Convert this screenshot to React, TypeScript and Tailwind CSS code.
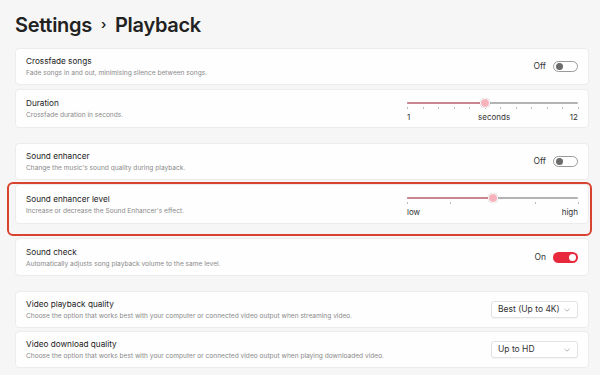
import React from "react";

const font = { fontFamily: "Inter, 'Noto Sans', sans-serif" };

function Card({ title, desc, right, className = "" }: { title: string; desc: string; right?: React.ReactNode; className?: string }) {
  return (
    <div className={`flex items-center justify-between rounded-[4px] border border-[#ececec] bg-[#fefefe] pl-[10px] pr-[10px] ${className}`}>
      <div className="flex flex-col">
        <div className="text-[8.2px] leading-[13px] text-[#222]">{title}</div>
        <div className="text-[6.6px] leading-[10px] text-[#8a8a8a]">{desc}</div>
      </div>
      {right}
    </div>
  );
}

function Toggle({ on }: { on: boolean }) {
  return (
    <div className="flex items-center gap-[7px]">
      <span className="text-[8.5px] text-[#333]">{on ? "On" : "Off"}</span>
      {on ? (
        <div className="flex h-[11px] w-[25px] items-center justify-end rounded-full bg-[#e8283c] pr-[2px]">
          <div className="h-[7px] w-[7px] rounded-full bg-white" />
        </div>
      ) : (
        <div className="flex h-[11px] w-[25px] items-center rounded-full border border-[#9a9a9a] bg-white pl-[2px]">
          <div className="h-[7px] w-[7px] rounded-full bg-[#6b6b6b]" />
        </div>
      )}
    </div>
  );
}

function Slider({ frac, ticks, labels }: { frac: number; ticks: number[]; labels: React.ReactNode }) {
  return (
    <div className="flex w-[171px] flex-col">
      <div className="relative h-[14px] w-full">
        <div className="absolute left-0 right-0 top-[6px] h-[2px] rounded-full bg-[#b3b3b3]" />
        <div className="absolute left-0 top-[6px] h-[2px] rounded-full bg-[#c98690]" style={{ width: `${frac * 100}%` }} />
        {ticks.map((t, i) => (
          <div key={i} className="absolute top-[11px] h-[2px] w-[1px] bg-[#bdbdbd]" style={{ left: `${t * 100}%` }} />
        ))}
        <div
          className="absolute top-[2px] h-[10px] w-[10px] -translate-x-1/2 rounded-full border-[1.5px] border-white bg-[#f7b3bc] shadow-[0_0_1px_rgba(0,0,0,0.3)]"
          style={{ left: `${frac * 100}%` }}
        />
      </div>
      <div className="mt-[2px] flex justify-between text-[8px] leading-[10px] text-[#333]">{labels}</div>
    </div>
  );
}

function Select({ value }: { value: string }) {
  return (
    <div className="flex h-[17px] w-[87px] items-center justify-between rounded-[3px] border border-[#e3e3e3] bg-white pl-[6px] pr-[7px] shadow-[0_1px_1px_rgba(0,0,0,0.04)]">
      <span className="text-[8.5px] text-[#333]">{value}</span>
      <svg width="6" height="4" viewBox="0 0 6 4">
        <path d="M0.5 0.8 L3 3.2 L5.5 0.8" stroke="#a0a0a0" strokeWidth="0.8" fill="none" />
      </svg>
    </div>
  );
}

export default function App() {
  const durTicks = Array.from({ length: 12 }, (_, i) => i / 11);
  return (
    <div className="h-[375px] w-[600px] overflow-hidden bg-[#f6f6f6] pl-[15px] pr-[11px]" style={font}>
      <div className="flex h-[48px] items-center gap-[9px] pt-[2px] text-[20px] font-semibold tracking-[-0.3px] text-[#222]">
        <span>Settings</span>
        <span className="text-[13px] font-semibold">›</span>
        <span>Playback</span>
      </div>
      <div className="flex flex-col gap-[4px]">
        <Card className="h-[37px]" title="Crossfade songs" desc="Fade songs in and out, minimising silence between songs." right={<Toggle on={false} />} />
        <Card
          className="h-[39px]"
          title="Duration"
          desc="Crossfade duration in seconds."
          right={
            <Slider
              frac={5 / 11}
              ticks={durTicks}
              labels={
                <>
                  <span>1</span>
                  <span className="pl-[8px]">seconds</span>
                  <span>12</span>
                </>
              }
            />
          }
        />
      </div>
      <div className="mt-[15px] flex flex-col">
        <Card className="h-[37px]" title="Sound enhancer" desc="Change the music's sound quality during playback." right={<Toggle on={false} />} />
        <div className="relative mt-[4px]">
          <Card
            className="h-[40px]"
            title="Sound enhancer level"
            desc="Increase or decrease the Sound Enhancer's effect."
            right={
              <Slider
                frac={0.5}
                ticks={[0, 0.25, 0.75, 1]}
                labels={
                  <>
                    <span>low</span>
                    <span>high</span>
                  </>
                }
              />
            }
          />
          <div className="pointer-events-none absolute -bottom-[12px] -left-[8px] -right-[3px] -top-[2px] rounded-[6px] border-2 border-[#d8432f]" />
        </div>
        <Card className="mt-[14px] h-[38px]" title="Sound check" desc="Automatically adjusts song playback volume to the same level." right={<Toggle on={true} />} />
      </div>
      <div className="mt-[15px] flex flex-col gap-[3px]">
        <Card className="h-[37px]" title="Video playback quality" desc="Choose the option that works best with your computer or connected video output when streaming video." right={<Select value="Best (Up to 4K)" />} />
        <Card className="h-[37px]" title="Video download quality" desc="Choose the option that works best with your computer or connected video output when playing downloaded video." right={<Select value="Up to HD" />} />
      </div>
    </div>
  );
}
